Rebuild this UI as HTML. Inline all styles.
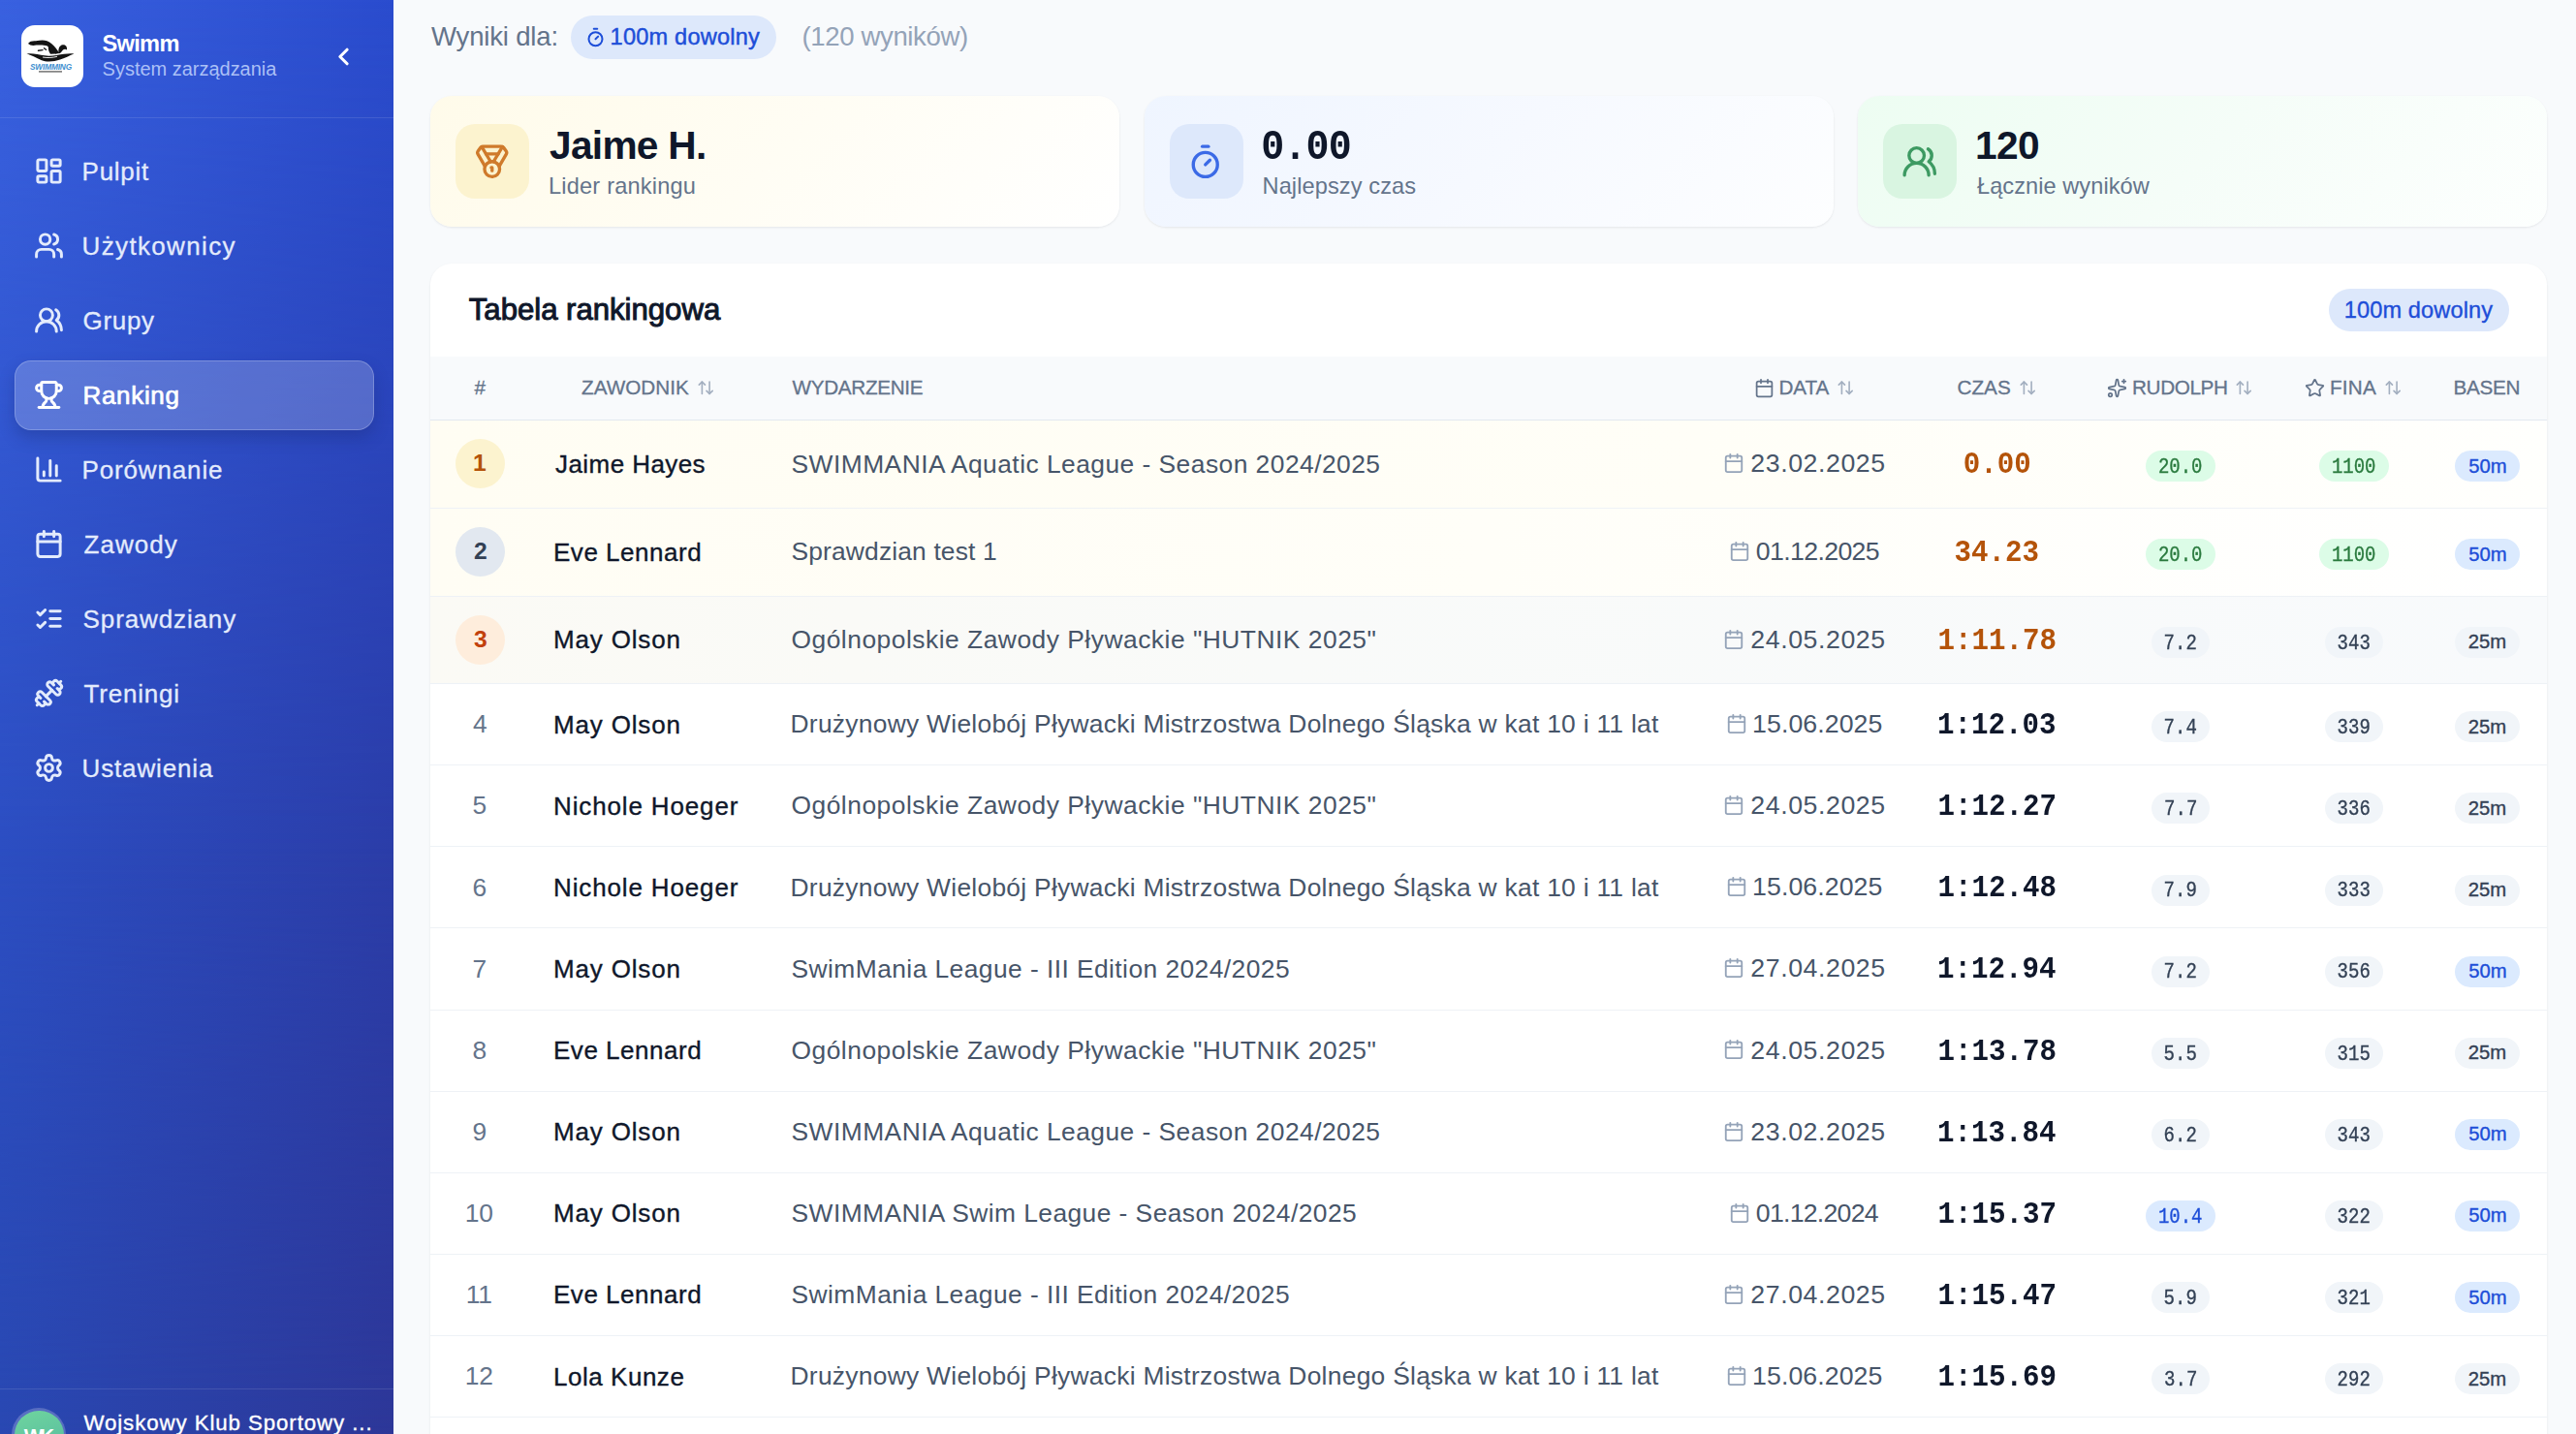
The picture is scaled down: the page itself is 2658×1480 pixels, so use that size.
<!DOCTYPE html>
<html lang="pl"><head><meta charset="utf-8"><title>Ranking</title>
<style>
html,body{margin:0;padding:0;}
body{width:2658px;height:1480px;overflow:hidden;position:relative;background:#f8fafc;font-family:"Liberation Sans",sans-serif;}
.t{position:absolute;line-height:1;white-space:nowrap;}
svg{display:block;}
</style></head><body>
<div style="position:absolute;left:0;top:0;width:406px;height:1480px;background:linear-gradient(to right,#3961e0,#2a4cce);"></div>
<div style="position:absolute;left:0;top:0;width:406px;height:1480px;background:linear-gradient(to right,#2c4ec2,#2b3da8);-webkit-mask-image:linear-gradient(to bottom,transparent 0px,#000 875px,#000 1480px);mask-image:linear-gradient(to bottom,transparent 0px,#000 875px,#000 1480px);"></div>
<div style="position:absolute;left:0;top:0;width:406px;height:1480px;background:linear-gradient(to right,#2948b2,#2d3798);-webkit-mask-image:linear-gradient(to bottom,transparent 0px,transparent 875px,#000 1480px);mask-image:linear-gradient(to bottom,transparent 0px,transparent 875px,#000 1480px);"></div>
<div style="position:absolute;left:0.00px;top:120.75px;width:406.00px;height:1.10px;background:rgba(255,255,255,0.11);"></div>
<div style="position:absolute;left:0.00px;top:1433.00px;width:406.00px;height:1.10px;background:rgba(255,255,255,0.11);"></div>
<div style="position:absolute;left:22.00px;top:26.00px;width:64.00px;height:64.00px;background:#fff;border-radius:14px;"></div>
<svg style="position:absolute;left:22px;top:26px" width="64" height="64" viewBox="0 0 64 64">
<path d="M7 19 C 8.5 16.5, 12 16, 15 16.3 C 19 15.6, 23 15.2, 26.5 16.2 C 30 17.5, 33 20.5, 35.5 23.5 C 37 25.5, 38.5 27.5, 39.5 29 L 35.5 29.5 C 33.5 27.5, 31 25.5, 28.5 23.5 L 27 21.5 C 23 20.2, 19 20.5, 15.5 20.6 C 12 21.2, 9 21, 7 19 Z" fill="#141414"/>
<path d="M28 22 C 31 24, 34 26.5, 36.5 29.5 L 30 29.8 C 28.5 27.5, 27.5 25, 28 22 Z" fill="#141414"/>
<path d="M38.5 28 C 38 24, 39.5 21, 42.5 20.3 C 46 19.8, 47.5 22.5, 47 25.5 C 46 24.8, 44.5 24.5, 43 25.5 C 42 27, 41 28.3, 39.5 29.3 Z" fill="#141414"/>
<path d="M17.5 26.3 L 22 25.6 M23.5 23.8 L 25.5 25.3" stroke="#141414" stroke-width="1.4" stroke-linecap="round"/>
<path d="M5.5 29.3 C 12 28.6, 18 30.3, 24 31.3 C 30 32.3, 38 30.8, 44 29.8 C 48 29.2, 51 29, 54.5 29.4 C 50 31, 46 33.5, 40 35.5 C 34 37.6, 26 38.2, 21 36.2 C 15 33.5, 10 31, 5.5 29.3 Z" fill="#141414"/>
<path d="M22 33 C 27 34, 33 33.5, 37 32.3" stroke="#ffffff" stroke-width="0.9" fill="none"/>
<text x="30.5" y="45.5" text-anchor="middle" font-family="Liberation Sans" font-weight="700" font-style="italic" font-size="8.3" fill="#3e8fd0" letter-spacing="-0.15">SWIMMING</text>
<rect x="18" y="47.2" width="24" height="1.4" fill="#444" opacity="0.8"/>
</svg>
<div class="t" style="left:105.60px;top:33.82px;font-family:'Liberation Sans', sans-serif;font-size:23.600px;font-weight:700;color:#ffffff;letter-spacing:-0.706px;">Swimm</div>
<div class="t" style="left:105.60px;top:61.17px;font-family:'Liberation Sans', sans-serif;font-size:20.000px;font-weight:400;color:rgba(200,218,255,0.82);letter-spacing:-0.018px;">System zarządzania</div>
<svg style="position:absolute;left:339.50px;top:43.50px;" width="29.00" height="29.00" viewBox="0 0 24 24" fill="none" stroke="#ffffff" stroke-width="2.60" stroke-linecap="round" stroke-linejoin="round"><path d="m15 18-6-6 6-6"/></svg>
<svg style="position:absolute;left:34.50px;top:160.50px;" width="31.00" height="31.00" viewBox="0 0 24 24" fill="none" stroke="#e3ebfc" stroke-width="2.30" stroke-linecap="round" stroke-linejoin="round"><rect width="7" height="9" x="3" y="3" rx="1"/><rect width="7" height="5" x="14" y="3" rx="1"/><rect width="7" height="9" x="14" y="12" rx="1"/><rect width="7" height="5" x="3" y="16" rx="1"/></svg>
<div class="t" style="left:84.60px;top:163.79px;font-family:'Liberation Sans', sans-serif;font-size:26.000px;font-weight:400;color:#e3ebfc;letter-spacing:0.717px;-webkit-text-stroke:0.3px currentColor;">Pulpit</div>
<svg style="position:absolute;left:34.50px;top:237.50px;" width="31.00" height="31.00" viewBox="0 0 24 24" fill="none" stroke="#e3ebfc" stroke-width="2.30" stroke-linecap="round" stroke-linejoin="round"><path d="M16 21v-2a4 4 0 0 0-4-4H6a4 4 0 0 0-4 4v2"/><path d="M16 3.128a4 4 0 0 1 0 7.744"/><path d="M22 21v-2a4 4 0 0 0-3-3.87"/><circle cx="9" cy="7" r="4"/></svg>
<div class="t" style="left:84.60px;top:240.79px;font-family:'Liberation Sans', sans-serif;font-size:26.000px;font-weight:400;color:#e3ebfc;letter-spacing:1.343px;-webkit-text-stroke:0.3px currentColor;">Użytkownicy</div>
<svg style="position:absolute;left:34.50px;top:314.50px;" width="31.00" height="31.00" viewBox="0 0 24 24" fill="none" stroke="#e3ebfc" stroke-width="2.30" stroke-linecap="round" stroke-linejoin="round"><path d="M18 21a8 8 0 0 0-16 0"/><circle cx="10" cy="8" r="5"/><path d="M22 20c0-3.37-2-6.5-4-8a5 5 0 0 0-.45-8.3"/></svg>
<div class="t" style="left:85.60px;top:317.79px;font-family:'Liberation Sans', sans-serif;font-size:26.000px;font-weight:400;color:#e3ebfc;letter-spacing:0.650px;-webkit-text-stroke:0.3px currentColor;">Grupy</div>
<div style="position:absolute;left:15.00px;top:372.00px;width:371.00px;height:72.00px;border-radius:17px;background:rgba(255,255,255,0.2);border:1.5px solid rgba(255,255,255,0.22);box-sizing:border-box;box-shadow:0 8px 16px rgba(20,30,90,0.25);"></div>
<svg style="position:absolute;left:34.50px;top:391.50px;" width="31.00" height="31.00" viewBox="0 0 24 24" fill="none" stroke="#ffffff" stroke-width="2.30" stroke-linecap="round" stroke-linejoin="round"><path d="M10 14.66v1.626a2 2 0 0 1-.976 1.696A5 5 0 0 0 7 21.978"/><path d="M14 14.66v1.626a2 2 0 0 0 .976 1.696A5 5 0 0 1 17 21.978"/><path d="M18 9h1.5a1 1 0 0 0 0-5H18"/><path d="M4 22h16"/><path d="M6 9a6 6 0 0 0 12 0V3a1 1 0 0 0-1-1H7a1 1 0 0 0-1 1z"/><path d="M6 9H4.5a1 1 0 0 1 0-5H6"/></svg>
<div class="t" style="left:85.50px;top:394.79px;font-family:'Liberation Sans', sans-serif;font-size:26.000px;font-weight:400;color:#ffffff;letter-spacing:0.678px;-webkit-text-stroke:0.7px currentColor;">Ranking</div>
<svg style="position:absolute;left:34.50px;top:468.50px;" width="31.00" height="31.00" viewBox="0 0 24 24" fill="none" stroke="#e3ebfc" stroke-width="2.30" stroke-linecap="round" stroke-linejoin="round"><path d="M3 3v16a2 2 0 0 0 2 2h16"/><path d="M18 17V9"/><path d="M13 17V5"/><path d="M8 17v-3"/></svg>
<div class="t" style="left:84.60px;top:471.79px;font-family:'Liberation Sans', sans-serif;font-size:26.000px;font-weight:400;color:#e3ebfc;letter-spacing:0.839px;-webkit-text-stroke:0.3px currentColor;">Porównanie</div>
<svg style="position:absolute;left:34.50px;top:545.50px;" width="31.00" height="31.00" viewBox="0 0 24 24" fill="none" stroke="#e3ebfc" stroke-width="2.30" stroke-linecap="round" stroke-linejoin="round"><path d="M8 2v4"/><path d="M16 2v4"/><rect width="18" height="18" x="3" y="4" rx="2"/><path d="M3 10h18"/></svg>
<div class="t" style="left:86.60px;top:548.79px;font-family:'Liberation Sans', sans-serif;font-size:26.000px;font-weight:400;color:#e3ebfc;letter-spacing:1.032px;-webkit-text-stroke:0.3px currentColor;">Zawody</div>
<svg style="position:absolute;left:34.50px;top:622.50px;" width="31.00" height="31.00" viewBox="0 0 24 24" fill="none" stroke="#e3ebfc" stroke-width="2.30" stroke-linecap="round" stroke-linejoin="round"><path d="m3 17 2 2 4-4"/><path d="m3 7 2 2 4-4"/><path d="M13 6h8"/><path d="M13 12h8"/><path d="M13 18h8"/></svg>
<div class="t" style="left:85.60px;top:625.79px;font-family:'Liberation Sans', sans-serif;font-size:26.000px;font-weight:400;color:#e3ebfc;letter-spacing:0.875px;-webkit-text-stroke:0.3px currentColor;">Sprawdziany</div>
<svg style="position:absolute;left:34.50px;top:699.50px;" width="31.00" height="31.00" viewBox="0 0 24 24" fill="none" stroke="#e3ebfc" stroke-width="2.30" stroke-linecap="round" stroke-linejoin="round"><path d="M17.596 12.768a2 2 0 1 0 2.829-2.829l-1.768-1.767a2 2 0 0 0 2.828-2.829l-2.828-2.828a2 2 0 0 0-2.829 2.828l-1.767-1.768a2 2 0 1 0-2.829 2.829z"/><path d="m2.5 21.5 1.4-1.4"/><path d="m20.1 3.9 1.4-1.4"/><path d="M5.343 21.485a2 2 0 1 0 2.829-2.828l1.767 1.768a2 2 0 1 0 2.829-2.829l-6.364-6.364a2 2 0 1 0-2.829 2.829l1.768 1.767a2 2 0 0 0-2.828 2.829z"/><path d="m9.6 14.4 4.8-4.8"/></svg>
<div class="t" style="left:86.60px;top:702.79px;font-family:'Liberation Sans', sans-serif;font-size:26.000px;font-weight:400;color:#e3ebfc;letter-spacing:0.773px;-webkit-text-stroke:0.3px currentColor;">Treningi</div>
<svg style="position:absolute;left:34.50px;top:776.50px;" width="31.00" height="31.00" viewBox="0 0 24 24" fill="none" stroke="#e3ebfc" stroke-width="2.30" stroke-linecap="round" stroke-linejoin="round"><path d="M9.671 4.136a2.34 2.34 0 0 1 4.659 0 2.34 2.34 0 0 0 3.319 1.915 2.34 2.34 0 0 1 2.33 4.033 2.34 2.34 0 0 0 0 3.831 2.34 2.34 0 0 1-2.33 4.033 2.34 2.34 0 0 0-3.319 1.915 2.34 2.34 0 0 1-4.659 0 2.34 2.34 0 0 0-3.32-1.915 2.34 2.34 0 0 1-2.33-4.033 2.34 2.34 0 0 0 0-3.831A2.34 2.34 0 0 1 6.35 6.051a2.34 2.34 0 0 0 3.319-1.915"/><circle cx="12" cy="12" r="3"/></svg>
<div class="t" style="left:84.60px;top:779.79px;font-family:'Liberation Sans', sans-serif;font-size:26.000px;font-weight:400;color:#e3ebfc;letter-spacing:0.843px;-webkit-text-stroke:0.3px currentColor;">Ustawienia</div>
<div style="position:absolute;left:12.2px;top:1452.8px;width:56.3px;height:56.3px;border-radius:50%;background:rgba(255,255,255,0.22);"></div>
<div style="position:absolute;left:15.1px;top:1455.7px;width:50.5px;height:50.5px;border-radius:50%;background:linear-gradient(160deg,#6fd59e,#55b9a0);"></div>
<div class="t" style="left:24.70px;top:1471.22px;font-family:'Liberation Sans', sans-serif;font-size:21.000px;font-weight:700;color:#ffffff;letter-spacing:-3.621px;">WK</div>
<div class="t" style="left:86.40px;top:1457.72px;font-family:'Liberation Sans', sans-serif;font-size:22.300px;font-weight:400;color:#ffffff;letter-spacing:0.900px;-webkit-text-stroke:0.35px currentColor;">Wojskowy Klub Sportowy ...</div>
<div class="t" style="left:445.00px;top:23.89px;font-family:'Liberation Sans', sans-serif;font-size:27.600px;font-weight:400;color:#64748b;letter-spacing:-0.209px;">Wyniki dla:</div>
<div style="position:absolute;left:589.00px;top:16.00px;width:212.00px;height:45.00px;border-radius:23px;background:#dde8fb;"></div>
<svg style="position:absolute;left:604.00px;top:28.00px;" width="21.00" height="21.00" viewBox="0 0 24 24" fill="none" stroke="#1d4ed8" stroke-width="2.30" stroke-linecap="round" stroke-linejoin="round"><line x1="10" x2="14" y1="2" y2="2"/><line x1="12" x2="15" y1="14" y2="11"/><circle cx="12" cy="14" r="8"/></svg>
<div class="t" style="left:629.60px;top:27.27px;font-family:'Liberation Sans', sans-serif;font-size:23.600px;font-weight:400;color:#1d4ed8;letter-spacing:0.187px;-webkit-text-stroke:0.45px currentColor;">100m dowolny</div>
<div class="t" style="left:827.50px;top:23.89px;font-family:'Liberation Sans', sans-serif;font-size:27.600px;font-weight:400;color:#94a3b8;letter-spacing:-0.389px;">(120 wyników)</div>
<div style="position:absolute;left:444.00px;top:99.00px;width:711.00px;height:135.00px;border-radius:22px;background:linear-gradient(135deg,#fffbea 0%,#fffdf4 50%,#ffffff 100%);box-shadow:0 1px 3px rgba(15,23,42,0.06),0 1px 2px rgba(15,23,42,0.03);"></div>
<div style="position:absolute;left:470.00px;top:128.00px;width:76.00px;height:77.00px;border-radius:20px;background:#fcf3cf;"></div>
<svg style="position:absolute;left:488.95px;top:147.55px;" width="37.50" height="37.50" viewBox="0 0 24 24" fill="none" stroke="#cf7a2b" stroke-width="2.15" stroke-linecap="round" stroke-linejoin="round"><path d="M7.21 15 2.66 7.14a2 2 0 0 1 .13-2.2L4.4 2.8A2 2 0 0 1 6 2h12a2 2 0 0 1 1.6.8l1.6 2.14a2 2 0 0 1 .14 2.2L16.79 15"/><path d="M11 12 5.12 2.2"/><path d="m13 12 5.88-9.8"/><path d="M8 7h8"/><circle cx="12" cy="17" r="5"/><path d="M12 18v-2h-.5"/></svg>
<div class="t" style="left:567.00px;top:129.55px;font-family:'Liberation Sans', sans-serif;font-size:40.700px;font-weight:700;color:#0f172a;letter-spacing:-0.722px;">Jaime H.</div>
<div class="t" style="left:566.00px;top:180.62px;font-family:'Liberation Sans', sans-serif;font-size:23.600px;font-weight:400;color:#64748b;letter-spacing:0.185px;">Lider rankingu</div>
<div style="position:absolute;left:1180.50px;top:99.00px;width:711.00px;height:135.00px;border-radius:22px;background:linear-gradient(135deg,#eff5ff 0%,#f6f9ff 50%,#fdfeff 100%);box-shadow:0 1px 3px rgba(15,23,42,0.06),0 1px 2px rgba(15,23,42,0.03);"></div>
<div style="position:absolute;left:1206.50px;top:128.00px;width:76.00px;height:77.00px;border-radius:20px;background:#dde8fb;"></div>
<svg style="position:absolute;left:1225.45px;top:147.55px;" width="37.50" height="37.50" viewBox="0 0 24 24" fill="none" stroke="#3b6ae6" stroke-width="2.15" stroke-linecap="round" stroke-linejoin="round"><line x1="10" x2="14" y1="2" y2="2"/><line x1="12" x2="15" y1="14" y2="11"/><circle cx="12" cy="14" r="8"/></svg>
<div class="t" style="left:1301.30px;top:133.76px;font-family:'Liberation Mono', monospace;font-size:40.000px;font-weight:700;color:#0f172a;letter-spacing:-0.871px;transform:scaleY(1.1000);transform-origin:0 30.64px;">0.00</div>
<div class="t" style="left:1302.50px;top:180.62px;font-family:'Liberation Sans', sans-serif;font-size:23.600px;font-weight:400;color:#64748b;letter-spacing:0.096px;">Najlepszy czas</div>
<div style="position:absolute;left:1917.00px;top:99.00px;width:711.00px;height:135.00px;border-radius:22px;background:linear-gradient(135deg,#edfdf2 0%,#f5fdf8 50%,#fdfffe 100%);box-shadow:0 1px 3px rgba(15,23,42,0.06),0 1px 2px rgba(15,23,42,0.03);"></div>
<div style="position:absolute;left:1943.00px;top:128.00px;width:76.00px;height:77.00px;border-radius:20px;background:#d9f5e1;"></div>
<svg style="position:absolute;left:1961.95px;top:147.55px;" width="37.50" height="37.50" viewBox="0 0 24 24" fill="none" stroke="#3d9a62" stroke-width="2.15" stroke-linecap="round" stroke-linejoin="round"><path d="M18 21a8 8 0 0 0-16 0"/><circle cx="10" cy="8" r="5"/><path d="M22 20c0-3.37-2-6.5-4-8a5 5 0 0 0-.45-8.3"/></svg>
<div class="t" style="left:2038.00px;top:130.35px;font-family:'Liberation Sans', sans-serif;font-size:40.700px;font-weight:700;color:#0f172a;letter-spacing:-0.628px;">120</div>
<div class="t" style="left:2040.00px;top:180.62px;font-family:'Liberation Sans', sans-serif;font-size:23.600px;font-weight:400;color:#64748b;letter-spacing:0.050px;">Łącznie wyników</div>
<div style="position:absolute;left:444.00px;top:272.00px;width:2184.00px;height:1300.00px;border-radius:22px;background:#ffffff;box-shadow:0 1px 3px rgba(15,23,42,0.06),0 1px 2px rgba(15,23,42,0.03);"></div>
<div class="t" style="left:483.80px;top:304.29px;font-family:'Liberation Sans', sans-serif;font-size:31.200px;font-weight:400;color:#0f172a;letter-spacing:-0.039px;-webkit-text-stroke:1.0px currentColor;">Tabela rankingowa</div>
<div style="position:absolute;left:2403.00px;top:298.00px;width:186.00px;height:44.00px;border-radius:22px;background:#dde8fb;"></div>
<div class="t" style="left:2418.70px;top:308.72px;font-family:'Liberation Sans', sans-serif;font-size:23.600px;font-weight:400;color:#1d4ed8;letter-spacing:0.114px;-webkit-text-stroke:0.35px currentColor;">100m dowolny</div>
<div style="position:absolute;left:444.00px;top:368.10px;width:2184.00px;height:65.75px;background:#f8fafc;border-bottom:1.5px solid #e2e8f0;box-sizing:border-box;"></div>
<div class="t" style="left:489.50px;top:389.58px;font-family:'Liberation Sans', sans-serif;font-size:20.700px;font-weight:400;color:#64748b;letter-spacing:0.000px;-webkit-text-stroke:0.3px currentColor;">#</div>
<div class="t" style="left:600.00px;top:389.58px;font-family:'Liberation Sans', sans-serif;font-size:20.700px;font-weight:400;color:#64748b;letter-spacing:0.013px;-webkit-text-stroke:0.3px currentColor;">ZAWODNIK</div>
<svg style="position:absolute;left:719.15px;top:391.35px;" width="18.50" height="18.50" viewBox="0 0 24 24" fill="none" stroke="#a3afc0" stroke-width="2.10" stroke-linecap="round" stroke-linejoin="round"><path d="m21 16-4 4-4-4"/><path d="M17 20V4"/><path d="m3 8 4-4 4 4"/><path d="M7 4v16"/></svg>
<div class="t" style="left:817.50px;top:389.58px;font-family:'Liberation Sans', sans-serif;font-size:20.700px;font-weight:400;color:#64748b;letter-spacing:-0.325px;-webkit-text-stroke:0.3px currentColor;">WYDARZENIE</div>
<svg style="position:absolute;left:1809.50px;top:390.10px;" width="21.00" height="21.00" viewBox="0 0 24 24" fill="none" stroke="#64748b" stroke-width="2.00" stroke-linecap="round" stroke-linejoin="round"><path d="M8 2v4"/><path d="M16 2v4"/><rect width="18" height="18" x="3" y="4" rx="2"/><path d="M3 10h18"/></svg>
<div class="t" style="left:1835.40px;top:389.58px;font-family:'Liberation Sans', sans-serif;font-size:20.700px;font-weight:400;color:#64748b;letter-spacing:-0.067px;-webkit-text-stroke:0.3px currentColor;">DATA</div>
<svg style="position:absolute;left:1895.25px;top:391.35px;" width="18.50" height="18.50" viewBox="0 0 24 24" fill="none" stroke="#a3afc0" stroke-width="2.10" stroke-linecap="round" stroke-linejoin="round"><path d="m21 16-4 4-4-4"/><path d="M17 20V4"/><path d="m3 8 4-4 4 4"/><path d="M7 4v16"/></svg>
<div class="t" style="left:2019.40px;top:389.58px;font-family:'Liberation Sans', sans-serif;font-size:20.700px;font-weight:400;color:#64748b;letter-spacing:0.075px;-webkit-text-stroke:0.3px currentColor;">CZAS</div>
<svg style="position:absolute;left:2083.25px;top:391.35px;" width="18.50" height="18.50" viewBox="0 0 24 24" fill="none" stroke="#a3afc0" stroke-width="2.10" stroke-linecap="round" stroke-linejoin="round"><path d="m21 16-4 4-4-4"/><path d="M17 20V4"/><path d="m3 8 4-4 4 4"/><path d="M7 4v16"/></svg>
<svg style="position:absolute;left:2173.50px;top:390.10px;" width="21.00" height="21.00" viewBox="0 0 24 24" fill="none" stroke="#64748b" stroke-width="2.00" stroke-linecap="round" stroke-linejoin="round"><path d="M11.017 2.814a1 1 0 0 1 1.966 0l1.051 5.558a2 2 0 0 0 1.594 1.594l5.558 1.051a1 1 0 0 1 0 1.966l-5.558 1.051a2 2 0 0 0-1.594 1.594l-1.051 5.558a1 1 0 0 1-1.966 0l-1.051-5.558a2 2 0 0 0-1.594-1.594l-5.558-1.051a1 1 0 0 1 0-1.966l5.558-1.051a2 2 0 0 0 1.594-1.594z"/><path d="M20 2v4"/><path d="M22 4h-4"/><circle cx="4" cy="20" r="2"/></svg>
<div class="t" style="left:2200.00px;top:389.58px;font-family:'Liberation Sans', sans-serif;font-size:20.700px;font-weight:400;color:#64748b;letter-spacing:-0.369px;-webkit-text-stroke:0.3px currentColor;">RUDOLPH</div>
<svg style="position:absolute;left:2306.25px;top:391.35px;" width="18.50" height="18.50" viewBox="0 0 24 24" fill="none" stroke="#a3afc0" stroke-width="2.10" stroke-linecap="round" stroke-linejoin="round"><path d="m21 16-4 4-4-4"/><path d="M17 20V4"/><path d="m3 8 4-4 4 4"/><path d="M7 4v16"/></svg>
<svg style="position:absolute;left:2378.00px;top:390.10px;" width="21.00" height="21.00" viewBox="0 0 24 24" fill="none" stroke="#64748b" stroke-width="2.00" stroke-linecap="round" stroke-linejoin="round"><path d="M11.525 2.295a.53.53 0 0 1 .95 0l2.31 4.679a2.123 2.123 0 0 0 1.595 1.16l5.166.756a.53.53 0 0 1 .294.904l-3.736 3.638a2.123 2.123 0 0 0-.611 1.878l.882 5.14a.53.53 0 0 1-.771.56l-4.618-2.428a2.122 2.122 0 0 0-1.973 0L6.396 21.01a.53.53 0 0 1-.77-.56l.881-5.139a2.122 2.122 0 0 0-.611-1.879L2.16 9.795a.53.53 0 0 1 .294-.906l5.165-.755a2.122 2.122 0 0 0 1.597-1.16z"/></svg>
<div class="t" style="left:2404.00px;top:389.58px;font-family:'Liberation Sans', sans-serif;font-size:20.700px;font-weight:400;color:#64748b;letter-spacing:0.225px;-webkit-text-stroke:0.3px currentColor;">FINA</div>
<svg style="position:absolute;left:2460.25px;top:391.35px;" width="18.50" height="18.50" viewBox="0 0 24 24" fill="none" stroke="#a3afc0" stroke-width="2.10" stroke-linecap="round" stroke-linejoin="round"><path d="m21 16-4 4-4-4"/><path d="M17 20V4"/><path d="m3 8 4-4 4 4"/><path d="M7 4v16"/></svg>
<div class="t" style="left:2531.50px;top:389.58px;font-family:'Liberation Sans', sans-serif;font-size:20.700px;font-weight:400;color:#64748b;letter-spacing:-0.298px;-webkit-text-stroke:0.3px currentColor;">BASEN</div>
<div style="position:absolute;left:444.00px;top:433.85px;width:2184.00px;height:91.10px;background:linear-gradient(90deg,#fffdf3 0%,#fffef7 60%,#fffffd 100%);border-bottom:1.5px solid #eef2f6;box-sizing:border-box;"></div>
<div style="position:absolute;left:470.00px;top:453.15px;width:51.00px;height:51.00px;border-radius:50%;background:#fcf3cf;"></div>
<div class="t" style="left:488.00px;top:466.34px;font-family:'Liberation Sans', sans-serif;font-size:24.700px;font-weight:700;color:#b45309;letter-spacing:0.000px;">1</div>
<div class="t" style="left:573.00px;top:465.84px;font-family:'Liberation Sans', sans-serif;font-size:26.000px;font-weight:400;color:#0f172a;letter-spacing:0.433px;-webkit-text-stroke:0.35px currentColor;">Jaime Hayes</div>
<div class="t" style="left:816.50px;top:465.50px;font-family:'Liberation Sans', sans-serif;font-size:26.400px;font-weight:400;color:#475569;letter-spacing:0.458px;">SWIMMANIA Aquatic League - Season 2024/2025</div>
<svg style="position:absolute;left:1778.45px;top:467.15px;" width="22.00" height="22.00" viewBox="0 0 24 24" fill="none" stroke="#94a3b8" stroke-width="2.00" stroke-linecap="round" stroke-linejoin="round"><path d="M8 2v4"/><path d="M16 2v4"/><rect width="18" height="18" x="3" y="4" rx="2"/><path d="M3 10h18"/></svg>
<div class="t" style="left:1806.30px;top:465.25px;font-family:'Liberation Sans', sans-serif;font-size:26.700px;font-weight:400;color:#475569;letter-spacing:0.586px;">23.02.2025</div>
<div class="t" style="left:2025.73px;top:466.28px;font-family:'Liberation Mono', monospace;font-size:29.200px;font-weight:700;color:#b45309;letter-spacing:0.000px;transform:scaleY(1.1000);transform-origin:0 22.37px;">0.00</div>
<div style="position:absolute;left:2214.00px;top:465.45px;width:72.00px;height:32.00px;border-radius:16px;background:#dcfce7;"></div>
<div class="t" style="left:2226.90px;top:474.29px;font-family:'Liberation Mono', monospace;font-size:19.000px;font-weight:400;color:#2a7a3e;letter-spacing:0.000px;transform:scaleY(1.1800);transform-origin:0 14.56px;-webkit-text-stroke:0.3px currentColor;">20.0</div>
<div style="position:absolute;left:2393.00px;top:465.45px;width:72.00px;height:32.00px;border-radius:16px;background:#dcfce7;"></div>
<div class="t" style="left:2405.90px;top:474.29px;font-family:'Liberation Mono', monospace;font-size:19.000px;font-weight:400;color:#2a7a3e;letter-spacing:0.000px;transform:scaleY(1.1800);transform-origin:0 14.56px;-webkit-text-stroke:0.3px currentColor;">1100</div>
<div style="position:absolute;left:2533.00px;top:465.45px;width:67.00px;height:32.00px;border-radius:16px;background:#dbeafe;"></div>
<div class="t" style="left:2547.22px;top:470.87px;font-family:'Liberation Sans', sans-serif;font-size:20.300px;font-weight:400;color:#1d4ed8;letter-spacing:0.000px;-webkit-text-stroke:0.35px currentColor;">50m</div>
<div style="position:absolute;left:444.00px;top:524.95px;width:2184.00px;height:90.60px;background:linear-gradient(90deg,#fffdf4 0%,#fffef8 50%,#ffffff 100%);border-bottom:1.5px solid #eef2f6;box-sizing:border-box;"></div>
<div style="position:absolute;left:470.00px;top:544.00px;width:51.00px;height:51.00px;border-radius:50%;background:#e2e8f0;"></div>
<div class="t" style="left:489.00px;top:557.19px;font-family:'Liberation Sans', sans-serif;font-size:24.700px;font-weight:700;color:#334155;letter-spacing:0.000px;">2</div>
<div class="t" style="left:571.00px;top:556.69px;font-family:'Liberation Sans', sans-serif;font-size:26.000px;font-weight:400;color:#0f172a;letter-spacing:0.522px;-webkit-text-stroke:0.35px currentColor;">Eve Lennard</div>
<div class="t" style="left:816.50px;top:556.35px;font-family:'Liberation Sans', sans-serif;font-size:26.400px;font-weight:400;color:#475569;letter-spacing:0.150px;">Sprawdzian test 1</div>
<svg style="position:absolute;left:1783.95px;top:558.00px;" width="22.00" height="22.00" viewBox="0 0 24 24" fill="none" stroke="#94a3b8" stroke-width="2.00" stroke-linecap="round" stroke-linejoin="round"><path d="M8 2v4"/><path d="M16 2v4"/><rect width="18" height="18" x="3" y="4" rx="2"/><path d="M3 10h18"/></svg>
<div class="t" style="left:1811.80px;top:556.10px;font-family:'Liberation Sans', sans-serif;font-size:26.700px;font-weight:400;color:#475569;letter-spacing:-0.636px;">01.12.2025</div>
<div class="t" style="left:2016.47px;top:557.13px;font-family:'Liberation Mono', monospace;font-size:29.200px;font-weight:700;color:#b45309;letter-spacing:0.000px;transform:scaleY(1.1000);transform-origin:0 22.37px;">34.23</div>
<div style="position:absolute;left:2214.00px;top:556.30px;width:72.00px;height:32.00px;border-radius:16px;background:#dcfce7;"></div>
<div class="t" style="left:2226.90px;top:565.14px;font-family:'Liberation Mono', monospace;font-size:19.000px;font-weight:400;color:#2a7a3e;letter-spacing:0.000px;transform:scaleY(1.1800);transform-origin:0 14.56px;-webkit-text-stroke:0.3px currentColor;">20.0</div>
<div style="position:absolute;left:2393.00px;top:556.30px;width:72.00px;height:32.00px;border-radius:16px;background:#dcfce7;"></div>
<div class="t" style="left:2405.90px;top:565.14px;font-family:'Liberation Mono', monospace;font-size:19.000px;font-weight:400;color:#2a7a3e;letter-spacing:0.000px;transform:scaleY(1.1800);transform-origin:0 14.56px;-webkit-text-stroke:0.3px currentColor;">1100</div>
<div style="position:absolute;left:2533.00px;top:556.30px;width:67.00px;height:32.00px;border-radius:16px;background:#dbeafe;"></div>
<div class="t" style="left:2547.22px;top:561.72px;font-family:'Liberation Sans', sans-serif;font-size:20.300px;font-weight:400;color:#1d4ed8;letter-spacing:0.000px;-webkit-text-stroke:0.35px currentColor;">50m</div>
<div style="position:absolute;left:444.00px;top:615.55px;width:2184.00px;height:90.60px;background:linear-gradient(90deg,#fbfaf5 0%,#f9faf9 40%,#f8fafc 100%);border-bottom:1.5px solid #eef2f6;box-sizing:border-box;"></div>
<div style="position:absolute;left:470.00px;top:634.60px;width:51.00px;height:51.00px;border-radius:50%;background:#feeddc;"></div>
<div class="t" style="left:489.00px;top:647.79px;font-family:'Liberation Sans', sans-serif;font-size:24.700px;font-weight:700;color:#c2410c;letter-spacing:0.000px;">3</div>
<div class="t" style="left:571.00px;top:647.29px;font-family:'Liberation Sans', sans-serif;font-size:26.000px;font-weight:400;color:#0f172a;letter-spacing:0.837px;-webkit-text-stroke:0.35px currentColor;">May Olson</div>
<div class="t" style="left:816.50px;top:646.95px;font-family:'Liberation Sans', sans-serif;font-size:26.400px;font-weight:400;color:#475569;letter-spacing:0.497px;">Ogólnopolskie Zawody Pływackie "HUTNIK 2025"</div>
<svg style="position:absolute;left:1778.45px;top:648.60px;" width="22.00" height="22.00" viewBox="0 0 24 24" fill="none" stroke="#94a3b8" stroke-width="2.00" stroke-linecap="round" stroke-linejoin="round"><path d="M8 2v4"/><path d="M16 2v4"/><rect width="18" height="18" x="3" y="4" rx="2"/><path d="M3 10h18"/></svg>
<div class="t" style="left:1806.30px;top:646.70px;font-family:'Liberation Sans', sans-serif;font-size:26.700px;font-weight:400;color:#475569;letter-spacing:0.586px;">24.05.2025</div>
<div class="t" style="left:1999.45px;top:647.73px;font-family:'Liberation Mono', monospace;font-size:29.200px;font-weight:700;color:#b45309;letter-spacing:0.000px;transform:scaleY(1.1000);transform-origin:0 22.37px;">1:11.78</div>
<div style="position:absolute;left:2220.00px;top:646.90px;width:60.00px;height:32.00px;border-radius:16px;background:#f1f5f9;"></div>
<div class="t" style="left:2232.60px;top:655.74px;font-family:'Liberation Mono', monospace;font-size:19.000px;font-weight:400;color:#334155;letter-spacing:0.000px;transform:scaleY(1.1800);transform-origin:0 14.56px;-webkit-text-stroke:0.3px currentColor;">7.2</div>
<div style="position:absolute;left:2399.00px;top:646.90px;width:60.00px;height:32.00px;border-radius:16px;background:#f1f5f9;"></div>
<div class="t" style="left:2411.60px;top:655.74px;font-family:'Liberation Mono', monospace;font-size:19.000px;font-weight:400;color:#334155;letter-spacing:0.000px;transform:scaleY(1.1800);transform-origin:0 14.56px;-webkit-text-stroke:0.3px currentColor;">343</div>
<div style="position:absolute;left:2533.00px;top:646.90px;width:67.00px;height:32.00px;border-radius:16px;background:#f1f5f9;"></div>
<div class="t" style="left:2546.72px;top:652.32px;font-family:'Liberation Sans', sans-serif;font-size:20.300px;font-weight:400;color:#334155;letter-spacing:0.000px;-webkit-text-stroke:0.35px currentColor;">25m</div>
<div style="position:absolute;left:444.00px;top:706.15px;width:2184.00px;height:84.12px;background:#ffffff;border-bottom:1.5px solid #eef2f6;box-sizing:border-box;"></div>
<div class="t" style="left:488.00px;top:734.31px;font-family:'Liberation Sans', sans-serif;font-size:26.400px;font-weight:400;color:#64748b;letter-spacing:0.000px;">4</div>
<div class="t" style="left:571.00px;top:734.65px;font-family:'Liberation Sans', sans-serif;font-size:26.000px;font-weight:400;color:#0f172a;letter-spacing:0.837px;-webkit-text-stroke:0.35px currentColor;">May Olson</div>
<div class="t" style="left:815.50px;top:734.31px;font-family:'Liberation Sans', sans-serif;font-size:26.400px;font-weight:400;color:#475569;letter-spacing:0.271px;">Drużynowy Wielobój Pływacki Mistrzostwa Dolnego Śląska w kat 10 i 11 lat</div>
<svg style="position:absolute;left:1781.20px;top:735.96px;" width="22.00" height="22.00" viewBox="0 0 24 24" fill="none" stroke="#94a3b8" stroke-width="2.00" stroke-linecap="round" stroke-linejoin="round"><path d="M8 2v4"/><path d="M16 2v4"/><rect width="18" height="18" x="3" y="4" rx="2"/><path d="M3 10h18"/></svg>
<div class="t" style="left:1808.05px;top:734.06px;font-family:'Liberation Sans', sans-serif;font-size:26.700px;font-weight:400;color:#475569;letter-spacing:0.086px;">15.06.2025</div>
<div class="t" style="left:1998.95px;top:735.09px;font-family:'Liberation Mono', monospace;font-size:29.200px;font-weight:700;color:#0f172a;letter-spacing:0.000px;transform:scaleY(1.1000);transform-origin:0 22.37px;">1:12.03</div>
<div style="position:absolute;left:2220.00px;top:734.26px;width:60.00px;height:32.00px;border-radius:16px;background:#f1f5f9;"></div>
<div class="t" style="left:2232.60px;top:743.10px;font-family:'Liberation Mono', monospace;font-size:19.000px;font-weight:400;color:#334155;letter-spacing:0.000px;transform:scaleY(1.1800);transform-origin:0 14.56px;-webkit-text-stroke:0.3px currentColor;">7.4</div>
<div style="position:absolute;left:2399.00px;top:734.26px;width:60.00px;height:32.00px;border-radius:16px;background:#f1f5f9;"></div>
<div class="t" style="left:2411.60px;top:743.10px;font-family:'Liberation Mono', monospace;font-size:19.000px;font-weight:400;color:#334155;letter-spacing:0.000px;transform:scaleY(1.1800);transform-origin:0 14.56px;-webkit-text-stroke:0.3px currentColor;">339</div>
<div style="position:absolute;left:2533.00px;top:734.26px;width:67.00px;height:32.00px;border-radius:16px;background:#f1f5f9;"></div>
<div class="t" style="left:2546.72px;top:739.68px;font-family:'Liberation Sans', sans-serif;font-size:20.300px;font-weight:400;color:#334155;letter-spacing:0.000px;-webkit-text-stroke:0.35px currentColor;">25m</div>
<div style="position:absolute;left:444.00px;top:790.27px;width:2184.00px;height:84.12px;background:#ffffff;border-bottom:1.5px solid #eef2f6;box-sizing:border-box;"></div>
<div class="t" style="left:487.50px;top:818.43px;font-family:'Liberation Sans', sans-serif;font-size:26.400px;font-weight:400;color:#64748b;letter-spacing:0.000px;">5</div>
<div class="t" style="left:571.00px;top:818.77px;font-family:'Liberation Sans', sans-serif;font-size:26.000px;font-weight:400;color:#0f172a;letter-spacing:0.862px;-webkit-text-stroke:0.35px currentColor;">Nichole Hoeger</div>
<div class="t" style="left:816.50px;top:818.43px;font-family:'Liberation Sans', sans-serif;font-size:26.400px;font-weight:400;color:#475569;letter-spacing:0.497px;">Ogólnopolskie Zawody Pływackie "HUTNIK 2025"</div>
<svg style="position:absolute;left:1778.45px;top:820.08px;" width="22.00" height="22.00" viewBox="0 0 24 24" fill="none" stroke="#94a3b8" stroke-width="2.00" stroke-linecap="round" stroke-linejoin="round"><path d="M8 2v4"/><path d="M16 2v4"/><rect width="18" height="18" x="3" y="4" rx="2"/><path d="M3 10h18"/></svg>
<div class="t" style="left:1806.30px;top:818.18px;font-family:'Liberation Sans', sans-serif;font-size:26.700px;font-weight:400;color:#475569;letter-spacing:0.586px;">24.05.2025</div>
<div class="t" style="left:1999.45px;top:819.21px;font-family:'Liberation Mono', monospace;font-size:29.200px;font-weight:700;color:#0f172a;letter-spacing:0.000px;transform:scaleY(1.1000);transform-origin:0 22.37px;">1:12.27</div>
<div style="position:absolute;left:2220.00px;top:818.38px;width:60.00px;height:32.00px;border-radius:16px;background:#f1f5f9;"></div>
<div class="t" style="left:2233.10px;top:827.22px;font-family:'Liberation Mono', monospace;font-size:19.000px;font-weight:400;color:#334155;letter-spacing:0.000px;transform:scaleY(1.1800);transform-origin:0 14.56px;-webkit-text-stroke:0.3px currentColor;">7.7</div>
<div style="position:absolute;left:2399.00px;top:818.38px;width:60.00px;height:32.00px;border-radius:16px;background:#f1f5f9;"></div>
<div class="t" style="left:2411.60px;top:827.22px;font-family:'Liberation Mono', monospace;font-size:19.000px;font-weight:400;color:#334155;letter-spacing:0.000px;transform:scaleY(1.1800);transform-origin:0 14.56px;-webkit-text-stroke:0.3px currentColor;">336</div>
<div style="position:absolute;left:2533.00px;top:818.38px;width:67.00px;height:32.00px;border-radius:16px;background:#f1f5f9;"></div>
<div class="t" style="left:2546.72px;top:823.80px;font-family:'Liberation Sans', sans-serif;font-size:20.300px;font-weight:400;color:#334155;letter-spacing:0.000px;-webkit-text-stroke:0.35px currentColor;">25m</div>
<div style="position:absolute;left:444.00px;top:874.39px;width:2184.00px;height:84.12px;background:#ffffff;border-bottom:1.5px solid #eef2f6;box-sizing:border-box;"></div>
<div class="t" style="left:487.50px;top:902.55px;font-family:'Liberation Sans', sans-serif;font-size:26.400px;font-weight:400;color:#64748b;letter-spacing:0.000px;">6</div>
<div class="t" style="left:571.00px;top:902.89px;font-family:'Liberation Sans', sans-serif;font-size:26.000px;font-weight:400;color:#0f172a;letter-spacing:0.862px;-webkit-text-stroke:0.35px currentColor;">Nichole Hoeger</div>
<div class="t" style="left:815.50px;top:902.55px;font-family:'Liberation Sans', sans-serif;font-size:26.400px;font-weight:400;color:#475569;letter-spacing:0.271px;">Drużynowy Wielobój Pływacki Mistrzostwa Dolnego Śląska w kat 10 i 11 lat</div>
<svg style="position:absolute;left:1781.20px;top:904.20px;" width="22.00" height="22.00" viewBox="0 0 24 24" fill="none" stroke="#94a3b8" stroke-width="2.00" stroke-linecap="round" stroke-linejoin="round"><path d="M8 2v4"/><path d="M16 2v4"/><rect width="18" height="18" x="3" y="4" rx="2"/><path d="M3 10h18"/></svg>
<div class="t" style="left:1808.05px;top:902.30px;font-family:'Liberation Sans', sans-serif;font-size:26.700px;font-weight:400;color:#475569;letter-spacing:0.086px;">15.06.2025</div>
<div class="t" style="left:1999.45px;top:903.33px;font-family:'Liberation Mono', monospace;font-size:29.200px;font-weight:700;color:#0f172a;letter-spacing:0.000px;transform:scaleY(1.1000);transform-origin:0 22.37px;">1:12.48</div>
<div style="position:absolute;left:2220.00px;top:902.50px;width:60.00px;height:32.00px;border-radius:16px;background:#f1f5f9;"></div>
<div class="t" style="left:2232.60px;top:911.34px;font-family:'Liberation Mono', monospace;font-size:19.000px;font-weight:400;color:#334155;letter-spacing:0.000px;transform:scaleY(1.1800);transform-origin:0 14.56px;-webkit-text-stroke:0.3px currentColor;">7.9</div>
<div style="position:absolute;left:2399.00px;top:902.50px;width:60.00px;height:32.00px;border-radius:16px;background:#f1f5f9;"></div>
<div class="t" style="left:2411.60px;top:911.34px;font-family:'Liberation Mono', monospace;font-size:19.000px;font-weight:400;color:#334155;letter-spacing:0.000px;transform:scaleY(1.1800);transform-origin:0 14.56px;-webkit-text-stroke:0.3px currentColor;">333</div>
<div style="position:absolute;left:2533.00px;top:902.50px;width:67.00px;height:32.00px;border-radius:16px;background:#f1f5f9;"></div>
<div class="t" style="left:2546.72px;top:907.92px;font-family:'Liberation Sans', sans-serif;font-size:20.300px;font-weight:400;color:#334155;letter-spacing:0.000px;-webkit-text-stroke:0.35px currentColor;">25m</div>
<div style="position:absolute;left:444.00px;top:958.51px;width:2184.00px;height:84.12px;background:#ffffff;border-bottom:1.5px solid #eef2f6;box-sizing:border-box;"></div>
<div class="t" style="left:487.50px;top:986.67px;font-family:'Liberation Sans', sans-serif;font-size:26.400px;font-weight:400;color:#64748b;letter-spacing:0.000px;">7</div>
<div class="t" style="left:571.00px;top:987.01px;font-family:'Liberation Sans', sans-serif;font-size:26.000px;font-weight:400;color:#0f172a;letter-spacing:0.837px;-webkit-text-stroke:0.35px currentColor;">May Olson</div>
<div class="t" style="left:816.50px;top:986.67px;font-family:'Liberation Sans', sans-serif;font-size:26.400px;font-weight:400;color:#475569;letter-spacing:0.429px;">SwimMania League - III Edition 2024/2025</div>
<svg style="position:absolute;left:1778.45px;top:988.32px;" width="22.00" height="22.00" viewBox="0 0 24 24" fill="none" stroke="#94a3b8" stroke-width="2.00" stroke-linecap="round" stroke-linejoin="round"><path d="M8 2v4"/><path d="M16 2v4"/><rect width="18" height="18" x="3" y="4" rx="2"/><path d="M3 10h18"/></svg>
<div class="t" style="left:1806.30px;top:986.42px;font-family:'Liberation Sans', sans-serif;font-size:26.700px;font-weight:400;color:#475569;letter-spacing:0.586px;">27.04.2025</div>
<div class="t" style="left:1998.95px;top:987.45px;font-family:'Liberation Mono', monospace;font-size:29.200px;font-weight:700;color:#0f172a;letter-spacing:0.000px;transform:scaleY(1.1000);transform-origin:0 22.37px;">1:12.94</div>
<div style="position:absolute;left:2220.00px;top:986.62px;width:60.00px;height:32.00px;border-radius:16px;background:#f1f5f9;"></div>
<div class="t" style="left:2232.60px;top:995.46px;font-family:'Liberation Mono', monospace;font-size:19.000px;font-weight:400;color:#334155;letter-spacing:0.000px;transform:scaleY(1.1800);transform-origin:0 14.56px;-webkit-text-stroke:0.3px currentColor;">7.2</div>
<div style="position:absolute;left:2399.00px;top:986.62px;width:60.00px;height:32.00px;border-radius:16px;background:#f1f5f9;"></div>
<div class="t" style="left:2411.60px;top:995.46px;font-family:'Liberation Mono', monospace;font-size:19.000px;font-weight:400;color:#334155;letter-spacing:0.000px;transform:scaleY(1.1800);transform-origin:0 14.56px;-webkit-text-stroke:0.3px currentColor;">356</div>
<div style="position:absolute;left:2533.00px;top:986.62px;width:67.00px;height:32.00px;border-radius:16px;background:#dbeafe;"></div>
<div class="t" style="left:2547.22px;top:992.04px;font-family:'Liberation Sans', sans-serif;font-size:20.300px;font-weight:400;color:#1d4ed8;letter-spacing:0.000px;-webkit-text-stroke:0.35px currentColor;">50m</div>
<div style="position:absolute;left:444.00px;top:1042.63px;width:2184.00px;height:84.12px;background:#ffffff;border-bottom:1.5px solid #eef2f6;box-sizing:border-box;"></div>
<div class="t" style="left:487.50px;top:1070.79px;font-family:'Liberation Sans', sans-serif;font-size:26.400px;font-weight:400;color:#64748b;letter-spacing:0.000px;">8</div>
<div class="t" style="left:571.00px;top:1071.13px;font-family:'Liberation Sans', sans-serif;font-size:26.000px;font-weight:400;color:#0f172a;letter-spacing:0.522px;-webkit-text-stroke:0.35px currentColor;">Eve Lennard</div>
<div class="t" style="left:816.50px;top:1070.79px;font-family:'Liberation Sans', sans-serif;font-size:26.400px;font-weight:400;color:#475569;letter-spacing:0.497px;">Ogólnopolskie Zawody Pływackie "HUTNIK 2025"</div>
<svg style="position:absolute;left:1778.45px;top:1072.44px;" width="22.00" height="22.00" viewBox="0 0 24 24" fill="none" stroke="#94a3b8" stroke-width="2.00" stroke-linecap="round" stroke-linejoin="round"><path d="M8 2v4"/><path d="M16 2v4"/><rect width="18" height="18" x="3" y="4" rx="2"/><path d="M3 10h18"/></svg>
<div class="t" style="left:1806.30px;top:1070.54px;font-family:'Liberation Sans', sans-serif;font-size:26.700px;font-weight:400;color:#475569;letter-spacing:0.586px;">24.05.2025</div>
<div class="t" style="left:1999.45px;top:1071.57px;font-family:'Liberation Mono', monospace;font-size:29.200px;font-weight:700;color:#0f172a;letter-spacing:0.000px;transform:scaleY(1.1000);transform-origin:0 22.37px;">1:13.78</div>
<div style="position:absolute;left:2220.00px;top:1070.74px;width:60.00px;height:32.00px;border-radius:16px;background:#f1f5f9;"></div>
<div class="t" style="left:2232.60px;top:1079.58px;font-family:'Liberation Mono', monospace;font-size:19.000px;font-weight:400;color:#334155;letter-spacing:0.000px;transform:scaleY(1.1800);transform-origin:0 14.56px;-webkit-text-stroke:0.3px currentColor;">5.5</div>
<div style="position:absolute;left:2399.00px;top:1070.74px;width:60.00px;height:32.00px;border-radius:16px;background:#f1f5f9;"></div>
<div class="t" style="left:2411.60px;top:1079.58px;font-family:'Liberation Mono', monospace;font-size:19.000px;font-weight:400;color:#334155;letter-spacing:0.000px;transform:scaleY(1.1800);transform-origin:0 14.56px;-webkit-text-stroke:0.3px currentColor;">315</div>
<div style="position:absolute;left:2533.00px;top:1070.74px;width:67.00px;height:32.00px;border-radius:16px;background:#f1f5f9;"></div>
<div class="t" style="left:2546.72px;top:1076.16px;font-family:'Liberation Sans', sans-serif;font-size:20.300px;font-weight:400;color:#334155;letter-spacing:0.000px;-webkit-text-stroke:0.35px currentColor;">25m</div>
<div style="position:absolute;left:444.00px;top:1126.75px;width:2184.00px;height:84.12px;background:#ffffff;border-bottom:1.5px solid #eef2f6;box-sizing:border-box;"></div>
<div class="t" style="left:487.50px;top:1154.91px;font-family:'Liberation Sans', sans-serif;font-size:26.400px;font-weight:400;color:#64748b;letter-spacing:0.000px;">9</div>
<div class="t" style="left:571.00px;top:1155.25px;font-family:'Liberation Sans', sans-serif;font-size:26.000px;font-weight:400;color:#0f172a;letter-spacing:0.837px;-webkit-text-stroke:0.35px currentColor;">May Olson</div>
<div class="t" style="left:816.50px;top:1154.91px;font-family:'Liberation Sans', sans-serif;font-size:26.400px;font-weight:400;color:#475569;letter-spacing:0.458px;">SWIMMANIA Aquatic League - Season 2024/2025</div>
<svg style="position:absolute;left:1778.45px;top:1156.56px;" width="22.00" height="22.00" viewBox="0 0 24 24" fill="none" stroke="#94a3b8" stroke-width="2.00" stroke-linecap="round" stroke-linejoin="round"><path d="M8 2v4"/><path d="M16 2v4"/><rect width="18" height="18" x="3" y="4" rx="2"/><path d="M3 10h18"/></svg>
<div class="t" style="left:1806.30px;top:1154.66px;font-family:'Liberation Sans', sans-serif;font-size:26.700px;font-weight:400;color:#475569;letter-spacing:0.586px;">23.02.2025</div>
<div class="t" style="left:1998.95px;top:1155.69px;font-family:'Liberation Mono', monospace;font-size:29.200px;font-weight:700;color:#0f172a;letter-spacing:0.000px;transform:scaleY(1.1000);transform-origin:0 22.37px;">1:13.84</div>
<div style="position:absolute;left:2220.00px;top:1154.86px;width:60.00px;height:32.00px;border-radius:16px;background:#f1f5f9;"></div>
<div class="t" style="left:2232.60px;top:1163.70px;font-family:'Liberation Mono', monospace;font-size:19.000px;font-weight:400;color:#334155;letter-spacing:0.000px;transform:scaleY(1.1800);transform-origin:0 14.56px;-webkit-text-stroke:0.3px currentColor;">6.2</div>
<div style="position:absolute;left:2399.00px;top:1154.86px;width:60.00px;height:32.00px;border-radius:16px;background:#f1f5f9;"></div>
<div class="t" style="left:2411.60px;top:1163.70px;font-family:'Liberation Mono', monospace;font-size:19.000px;font-weight:400;color:#334155;letter-spacing:0.000px;transform:scaleY(1.1800);transform-origin:0 14.56px;-webkit-text-stroke:0.3px currentColor;">343</div>
<div style="position:absolute;left:2533.00px;top:1154.86px;width:67.00px;height:32.00px;border-radius:16px;background:#dbeafe;"></div>
<div class="t" style="left:2547.22px;top:1160.28px;font-family:'Liberation Sans', sans-serif;font-size:20.300px;font-weight:400;color:#1d4ed8;letter-spacing:0.000px;-webkit-text-stroke:0.35px currentColor;">50m</div>
<div style="position:absolute;left:444.00px;top:1210.87px;width:2184.00px;height:84.12px;background:#ffffff;border-bottom:1.5px solid #eef2f6;box-sizing:border-box;"></div>
<div class="t" style="left:479.66px;top:1239.03px;font-family:'Liberation Sans', sans-serif;font-size:26.400px;font-weight:400;color:#64748b;letter-spacing:0.000px;">10</div>
<div class="t" style="left:571.00px;top:1239.37px;font-family:'Liberation Sans', sans-serif;font-size:26.000px;font-weight:400;color:#0f172a;letter-spacing:0.837px;-webkit-text-stroke:0.35px currentColor;">May Olson</div>
<div class="t" style="left:816.50px;top:1239.03px;font-family:'Liberation Sans', sans-serif;font-size:26.400px;font-weight:400;color:#475569;letter-spacing:0.436px;">SWIMMANIA Swim League - Season 2024/2025</div>
<svg style="position:absolute;left:1783.95px;top:1240.68px;" width="22.00" height="22.00" viewBox="0 0 24 24" fill="none" stroke="#94a3b8" stroke-width="2.00" stroke-linecap="round" stroke-linejoin="round"><path d="M8 2v4"/><path d="M16 2v4"/><rect width="18" height="18" x="3" y="4" rx="2"/><path d="M3 10h18"/></svg>
<div class="t" style="left:1811.80px;top:1238.78px;font-family:'Liberation Sans', sans-serif;font-size:26.700px;font-weight:400;color:#475569;letter-spacing:-0.747px;">01.12.2024</div>
<div class="t" style="left:1999.45px;top:1239.81px;font-family:'Liberation Mono', monospace;font-size:29.200px;font-weight:700;color:#0f172a;letter-spacing:0.000px;transform:scaleY(1.1000);transform-origin:0 22.37px;">1:15.37</div>
<div style="position:absolute;left:2214.00px;top:1238.98px;width:72.00px;height:32.00px;border-radius:16px;background:#dbeafe;"></div>
<div class="t" style="left:2226.90px;top:1247.82px;font-family:'Liberation Mono', monospace;font-size:19.000px;font-weight:400;color:#1d4ed8;letter-spacing:0.000px;transform:scaleY(1.1800);transform-origin:0 14.56px;-webkit-text-stroke:0.3px currentColor;">10.4</div>
<div style="position:absolute;left:2399.00px;top:1238.98px;width:60.00px;height:32.00px;border-radius:16px;background:#f1f5f9;"></div>
<div class="t" style="left:2411.60px;top:1247.82px;font-family:'Liberation Mono', monospace;font-size:19.000px;font-weight:400;color:#334155;letter-spacing:0.000px;transform:scaleY(1.1800);transform-origin:0 14.56px;-webkit-text-stroke:0.3px currentColor;">322</div>
<div style="position:absolute;left:2533.00px;top:1238.98px;width:67.00px;height:32.00px;border-radius:16px;background:#dbeafe;"></div>
<div class="t" style="left:2547.22px;top:1244.40px;font-family:'Liberation Sans', sans-serif;font-size:20.300px;font-weight:400;color:#1d4ed8;letter-spacing:0.000px;-webkit-text-stroke:0.35px currentColor;">50m</div>
<div style="position:absolute;left:444.00px;top:1294.99px;width:2184.00px;height:84.12px;background:#ffffff;border-bottom:1.5px solid #eef2f6;box-sizing:border-box;"></div>
<div class="t" style="left:480.64px;top:1323.15px;font-family:'Liberation Sans', sans-serif;font-size:26.400px;font-weight:400;color:#64748b;letter-spacing:0.000px;">11</div>
<div class="t" style="left:571.00px;top:1323.49px;font-family:'Liberation Sans', sans-serif;font-size:26.000px;font-weight:400;color:#0f172a;letter-spacing:0.522px;-webkit-text-stroke:0.35px currentColor;">Eve Lennard</div>
<div class="t" style="left:816.50px;top:1323.15px;font-family:'Liberation Sans', sans-serif;font-size:26.400px;font-weight:400;color:#475569;letter-spacing:0.429px;">SwimMania League - III Edition 2024/2025</div>
<svg style="position:absolute;left:1778.45px;top:1324.80px;" width="22.00" height="22.00" viewBox="0 0 24 24" fill="none" stroke="#94a3b8" stroke-width="2.00" stroke-linecap="round" stroke-linejoin="round"><path d="M8 2v4"/><path d="M16 2v4"/><rect width="18" height="18" x="3" y="4" rx="2"/><path d="M3 10h18"/></svg>
<div class="t" style="left:1806.30px;top:1322.90px;font-family:'Liberation Sans', sans-serif;font-size:26.700px;font-weight:400;color:#475569;letter-spacing:0.586px;">27.04.2025</div>
<div class="t" style="left:1999.45px;top:1323.93px;font-family:'Liberation Mono', monospace;font-size:29.200px;font-weight:700;color:#0f172a;letter-spacing:0.000px;transform:scaleY(1.1000);transform-origin:0 22.37px;">1:15.47</div>
<div style="position:absolute;left:2220.00px;top:1323.10px;width:60.00px;height:32.00px;border-radius:16px;background:#f1f5f9;"></div>
<div class="t" style="left:2232.60px;top:1331.94px;font-family:'Liberation Mono', monospace;font-size:19.000px;font-weight:400;color:#334155;letter-spacing:0.000px;transform:scaleY(1.1800);transform-origin:0 14.56px;-webkit-text-stroke:0.3px currentColor;">5.9</div>
<div style="position:absolute;left:2399.00px;top:1323.10px;width:60.00px;height:32.00px;border-radius:16px;background:#f1f5f9;"></div>
<div class="t" style="left:2411.60px;top:1331.94px;font-family:'Liberation Mono', monospace;font-size:19.000px;font-weight:400;color:#334155;letter-spacing:0.000px;transform:scaleY(1.1800);transform-origin:0 14.56px;-webkit-text-stroke:0.3px currentColor;">321</div>
<div style="position:absolute;left:2533.00px;top:1323.10px;width:67.00px;height:32.00px;border-radius:16px;background:#dbeafe;"></div>
<div class="t" style="left:2547.22px;top:1328.52px;font-family:'Liberation Sans', sans-serif;font-size:20.300px;font-weight:400;color:#1d4ed8;letter-spacing:0.000px;-webkit-text-stroke:0.35px currentColor;">50m</div>
<div style="position:absolute;left:444.00px;top:1379.11px;width:2184.00px;height:84.12px;background:#ffffff;border-bottom:1.5px solid #eef2f6;box-sizing:border-box;"></div>
<div class="t" style="left:479.66px;top:1407.27px;font-family:'Liberation Sans', sans-serif;font-size:26.400px;font-weight:400;color:#64748b;letter-spacing:0.000px;">12</div>
<div class="t" style="left:571.00px;top:1407.61px;font-family:'Liberation Sans', sans-serif;font-size:26.000px;font-weight:400;color:#0f172a;letter-spacing:0.529px;-webkit-text-stroke:0.35px currentColor;">Lola Kunze</div>
<div class="t" style="left:815.50px;top:1407.27px;font-family:'Liberation Sans', sans-serif;font-size:26.400px;font-weight:400;color:#475569;letter-spacing:0.271px;">Drużynowy Wielobój Pływacki Mistrzostwa Dolnego Śląska w kat 10 i 11 lat</div>
<svg style="position:absolute;left:1781.20px;top:1408.92px;" width="22.00" height="22.00" viewBox="0 0 24 24" fill="none" stroke="#94a3b8" stroke-width="2.00" stroke-linecap="round" stroke-linejoin="round"><path d="M8 2v4"/><path d="M16 2v4"/><rect width="18" height="18" x="3" y="4" rx="2"/><path d="M3 10h18"/></svg>
<div class="t" style="left:1808.05px;top:1407.02px;font-family:'Liberation Sans', sans-serif;font-size:26.700px;font-weight:400;color:#475569;letter-spacing:0.086px;">15.06.2025</div>
<div class="t" style="left:1999.45px;top:1408.05px;font-family:'Liberation Mono', monospace;font-size:29.200px;font-weight:700;color:#0f172a;letter-spacing:0.000px;transform:scaleY(1.1000);transform-origin:0 22.37px;">1:15.69</div>
<div style="position:absolute;left:2220.00px;top:1407.22px;width:60.00px;height:32.00px;border-radius:16px;background:#f1f5f9;"></div>
<div class="t" style="left:2233.10px;top:1416.06px;font-family:'Liberation Mono', monospace;font-size:19.000px;font-weight:400;color:#334155;letter-spacing:0.000px;transform:scaleY(1.1800);transform-origin:0 14.56px;-webkit-text-stroke:0.3px currentColor;">3.7</div>
<div style="position:absolute;left:2399.00px;top:1407.22px;width:60.00px;height:32.00px;border-radius:16px;background:#f1f5f9;"></div>
<div class="t" style="left:2411.60px;top:1416.06px;font-family:'Liberation Mono', monospace;font-size:19.000px;font-weight:400;color:#334155;letter-spacing:0.000px;transform:scaleY(1.1800);transform-origin:0 14.56px;-webkit-text-stroke:0.3px currentColor;">292</div>
<div style="position:absolute;left:2533.00px;top:1407.22px;width:67.00px;height:32.00px;border-radius:16px;background:#f1f5f9;"></div>
<div class="t" style="left:2546.72px;top:1412.64px;font-family:'Liberation Sans', sans-serif;font-size:20.300px;font-weight:400;color:#334155;letter-spacing:0.000px;-webkit-text-stroke:0.35px currentColor;">25m</div>
<div style="position:absolute;left:444.00px;top:1463.23px;width:2184.00px;height:84.12px;background:#ffffff;border-bottom:1.5px solid #eef2f6;box-sizing:border-box;"></div>
<div class="t" style="left:479.66px;top:1491.39px;font-family:'Liberation Sans', sans-serif;font-size:26.400px;font-weight:400;color:#64748b;letter-spacing:0.000px;">13</div>
<div class="t" style="left:571.00px;top:1491.73px;font-family:'Liberation Sans', sans-serif;font-size:26.000px;font-weight:400;color:#0f172a;letter-spacing:0.837px;-webkit-text-stroke:0.35px currentColor;">May Olson</div>
<div class="t" style="left:816.50px;top:1491.39px;font-family:'Liberation Sans', sans-serif;font-size:26.400px;font-weight:400;color:#475569;letter-spacing:0.458px;">SWIMMANIA Aquatic League - Season 2024/2025</div>
<svg style="position:absolute;left:1778.45px;top:1493.04px;" width="22.00" height="22.00" viewBox="0 0 24 24" fill="none" stroke="#94a3b8" stroke-width="2.00" stroke-linecap="round" stroke-linejoin="round"><path d="M8 2v4"/><path d="M16 2v4"/><rect width="18" height="18" x="3" y="4" rx="2"/><path d="M3 10h18"/></svg>
<div class="t" style="left:1806.30px;top:1491.14px;font-family:'Liberation Sans', sans-serif;font-size:26.700px;font-weight:400;color:#475569;letter-spacing:0.586px;">23.02.2025</div>
<div class="t" style="left:1999.45px;top:1492.17px;font-family:'Liberation Mono', monospace;font-size:29.200px;font-weight:700;color:#0f172a;letter-spacing:0.000px;transform:scaleY(1.1000);transform-origin:0 22.37px;">1:15.80</div>
<div style="position:absolute;left:2220.00px;top:1491.34px;width:60.00px;height:32.00px;border-radius:16px;background:#f1f5f9;"></div>
<div class="t" style="left:2232.60px;top:1500.18px;font-family:'Liberation Mono', monospace;font-size:19.000px;font-weight:400;color:#334155;letter-spacing:0.000px;transform:scaleY(1.1800);transform-origin:0 14.56px;-webkit-text-stroke:0.3px currentColor;">6.0</div>
<div style="position:absolute;left:2399.00px;top:1491.34px;width:60.00px;height:32.00px;border-radius:16px;background:#f1f5f9;"></div>
<div class="t" style="left:2411.60px;top:1500.18px;font-family:'Liberation Mono', monospace;font-size:19.000px;font-weight:400;color:#334155;letter-spacing:0.000px;transform:scaleY(1.1800);transform-origin:0 14.56px;-webkit-text-stroke:0.3px currentColor;">340</div>
<div style="position:absolute;left:2533.00px;top:1491.34px;width:67.00px;height:32.00px;border-radius:16px;background:#dbeafe;"></div>
<div class="t" style="left:2547.22px;top:1496.76px;font-family:'Liberation Sans', sans-serif;font-size:20.300px;font-weight:400;color:#1d4ed8;letter-spacing:0.000px;-webkit-text-stroke:0.35px currentColor;">50m</div>
</body></html>
